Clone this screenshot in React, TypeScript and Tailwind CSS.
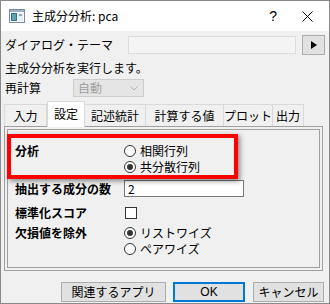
import React from "react";

const Radio = ({ checked }: { checked?: boolean }) => (
  <span className="relative inline-flex w-[12px] h-[12px] rounded-full border border-[#333333] bg-white items-center justify-center shrink-0">
    {checked && <span className="w-[6px] h-[6px] rounded-full bg-[#333333]" />}
  </span>
);

export default function App() {
  return (
    <div className="relative flex flex-col w-[330px] h-[304px] bg-[#f0f0f0] border border-[#8a8a8a] overflow-hidden font-['Noto_Sans_CJK_JP',sans-serif] text-[12px] text-black leading-none">
      {/* Title bar */}
      <div className="shrink-0 h-[30px] bg-white flex items-center">
        <svg className="ml-[8px]" width="16" height="14" viewBox="0 0 16 14">
          <rect x="0.5" y="0.5" width="15" height="13" fill="#ffffff" stroke="#7a8a9a" />
          <rect x="1" y="1" width="14" height="2" fill="#9ab0c4" />
          <rect x="2" y="4" width="6" height="8" fill="#2f6f8f" />
          <rect x="3" y="5" width="4" height="6" fill="#5fa6b0" />
          <rect x="9" y="4" width="5" height="8" fill="#e8eef2" />
          <rect x="10" y="5" width="3" height="2" fill="#9aa" />
        </svg>
        <span className="ml-[7px] text-[12px]">主成分分析: pca</span>
        <span className="ml-auto mr-[25px] text-[14px] font-['Liberation_Sans',sans-serif]">?</span>
        <svg className="mr-[16px]" width="11" height="11" viewBox="0 0 11 11">
          <path d="M0.5 0.5 L10.5 10.5 M10.5 0.5 L0.5 10.5" stroke="#000" strokeWidth="1" />
        </svg>
      </div>

      {/* Theme row */}
      <div className="shrink-0 mt-[4px] h-[20px] flex items-center pl-[4px]">
        <span className="w-[123px]">ダイアログ・テーマ</span>
        <div className="w-[168px] h-[18px] border border-[#dcdcdc] bg-[#f4f4f4]" />
        <div className="ml-[6px] w-[23px] h-[20px] border border-[#adadad] bg-[#e1e1e1] flex items-center justify-center">
          <svg width="6" height="8" viewBox="0 0 6 8"><path d="M0 0 L6 4 L0 8 Z" fill="#000" /></svg>
        </div>
      </div>

      <div className="shrink-0 mt-[5px] h-[16px] flex items-center pl-[4px]">主成分分析を実行します。</div>

      <div className="shrink-0 mt-[3px] h-[18px] flex items-center pl-[4px]">
        <span className="w-[68px]">再計算</span>
        <div className="w-[71px] h-[18px] border border-[#cccccc] bg-[#e5e5e5] flex items-center pl-[4px] text-[#a0a0a0]">
          <span>自動</span>
          <svg className="ml-auto mr-[5px]" width="8" height="5" viewBox="0 0 8 5"><path d="M0.5 0.5 L4 4 L7.5 0.5" stroke="#b0b0b0" fill="none" /></svg>
        </div>
      </div>

      {/* Tabs */}
      <div className="shrink-0 mt-[4px] h-[25px] flex items-end pl-[3px] relative z-10">
        <div className="w-[43px] h-[22px] border border-b-0 border-[#d9d9d9] flex items-center justify-center">入力</div>
        <div className="w-[38px] h-[26px] -mb-[1px] border border-b-0 border-[#d9d9d9] bg-white flex items-center justify-center pb-[2px]">設定</div>
        <div className="w-[61px] h-[22px] border border-b-0 border-l-0 border-[#d9d9d9] flex items-center justify-center">記述統計</div>
        <div className="w-[78px] h-[22px] border border-b-0 border-l-0 border-[#d9d9d9] flex items-center justify-center">計算する値</div>
        <div className="w-[49px] h-[22px] border border-b-0 border-l-0 border-[#d9d9d9] flex items-center justify-center">プロット</div>
        <div className="w-[31px] h-[22px] border border-b-0 border-l-0 border-[#d9d9d9] flex items-center justify-center">出力</div>
      </div>

      {/* Panel */}
      <div className="shrink-0 ml-[3px] w-[319px] h-[145px] border border-[#a0a0a0] p-[2px] flex">
        <div className="relative flex-1 flex flex-col border border-[#a0a0a0] pt-[13px] pl-[7px]">
          <div className="shrink-0 flex">
            <div className="w-[109px] h-[16px] flex items-center font-bold">分析</div>
            <div className="flex flex-col">
              <div className="h-[16px] flex items-center gap-[4px]"><Radio />相関行列</div>
              <div className="h-[16px] flex items-center gap-[4px]"><Radio checked />共分散行列</div>
            </div>
          </div>
          <div className="shrink-0 mt-[5px] h-[17px] flex items-center">
            <div className="w-[109px] font-bold">抽出する成分の数</div>
            <div className="w-[120px] h-[17px] border border-[#7a7a7a] bg-white flex items-center pl-[3px]">2</div>
          </div>
          <div className="shrink-0 mt-[8px] h-[16px] flex items-center">
            <div className="w-[110px] font-bold">標準化スコア</div>
            <span className="w-[12px] h-[12px] border border-[#333333] bg-white" />
          </div>
          <div className="shrink-0 mt-[4px] flex">
            <div className="w-[109px] h-[16px] flex items-center font-bold">欠損値を除外</div>
            <div className="flex flex-col">
              <div className="h-[16px] flex items-center gap-[4px]"><Radio checked />リストワイズ</div>
              <div className="h-[16px] flex items-center gap-[4px]"><Radio />ペアワイズ</div>
            </div>
          </div>
        </div>
      </div>

      <div className="absolute left-[6px] top-[133px] w-[231px] h-[45px] border-[4px] border-[#ff0000] shadow-[2px_2px_5px_rgba(0,0,0,0.45)]" />

      <div className="shrink-0 mt-[11px] h-[20px] flex justify-end pr-[5px] gap-[7px]">
        <div className="w-[105px] h-[20px] border border-[#adadad] bg-[#e1e1e1] flex items-center justify-center">関連するアプリ</div>
        <div className="w-[72px] h-[20px] border-2 border-[#0078d7] bg-[#e1e1e1] flex items-center justify-center font-['Liberation_Sans',sans-serif]">OK</div>
        <div className="ml-[1px] w-[71px] h-[20px] border border-[#adadad] bg-[#e1e1e1] flex items-center justify-center">キャンセル</div>
      </div>
    </div>
  );
}
